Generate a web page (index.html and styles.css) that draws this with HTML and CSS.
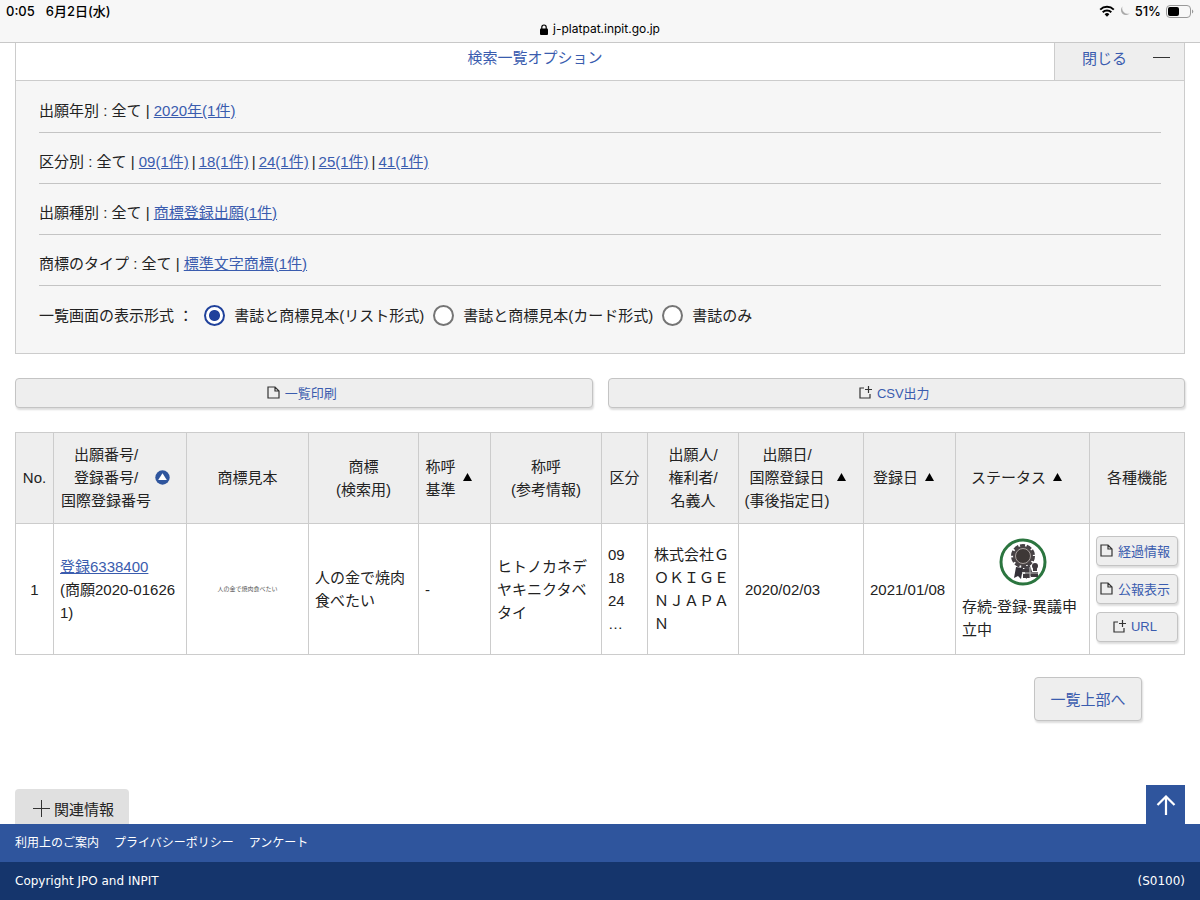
FILE: index.html
```html
<!DOCTYPE html>
<html lang="ja">
<head>
    <meta charset="UTF-8">
    <meta name="viewport" content="width=device-width, initial-scale=1.0">
    <title>J-PlatPat</title>
    <link rel="stylesheet" href="styles.css">
</head>
<body>

<header class="browser-bar">
    <div class="status">
        <div class="status-left"><span>0:05</span><span>6月2日(水)</span></div>
        <div class="status-right">
            <svg width="16" height="12" viewBox="0 0 16 12">
                <path d="M1.2 4.6a9.8 9.8 0 0 1 13.6 0M3.7 7.2a6.2 6.2 0 0 1 8.6 0" fill="none" stroke="#000" stroke-width="2"/>
                <path d="M8 11.8L5.6 9.3a3.4 3.4 0 0 1 4.8 0z"/>
            </svg>
            <svg class="moon" width="10" height="10" viewBox="0 0 10 10">
                <path d="M2.600 0.300A5 5 0 1 0 9.800 7.200A5.400 5.400 0 0 1 2.600 0.300z" fill="#aaa"/>
            </svg>
            <span>51%</span>
            <svg width="28" height="13" viewBox="0 0 28 13">
                <rect x="0.5" y="0.5" width="24" height="12" rx="3.5" fill="none" stroke="#999"/>
                <rect x="2" y="2" width="11" height="9" rx="2"/>
                <path d="M26 4.5a2.2 2.2 0 0 1 0 4z" fill="#999"/>
            </svg>
        </div>
    </div>
    <div class="address">
        <svg width="8" height="11" viewBox="0 0 8 11">
            <rect x="0" y="4.5" width="8" height="6.5" rx="1"/>
            <path d="M1.8 5V3.2a2.2 2.2 0 0 1 4.4 0V5" fill="none" stroke="#000" stroke-width="1.2"/>
        </svg>
        <span>j-platpat.inpit.go.jp</span>
    </div>
</header>

<main class="content">
    <section class="options">
        <div class="options-head">
            <h2 class="options-title">検索一覧オプション</h2>
            <button type="button" class="options-toggle"><span>閉じる</span><span class="minus"></span></button>
        </div>
        <div class="options-body">
            <div class="filter">出願年別 : 全て | <a href="#">2020年(1件)</a></div>
            <div class="filter">区分別 : 全て | <span class="filter-links"><a href="#">09(1件)</a> | <a href="#">18(1件)</a> | <a href="#">24(1件)</a> | <a href="#">25(1件)</a> | <a href="#">41(1件)</a></span></div>
            <div class="filter">出願種別 : 全て | <a href="#">商標登録出願(1件)</a></div>
            <div class="filter">商標のタイプ : 全て | <a href="#">標準文字商標(1件)</a></div>
            <div class="display-type" role="radiogroup" aria-labelledby="displayType">
                <span id="displayType" class="display-title">一覧画面の表示形式 ：</span>
                <label><input type="radio" name="display" checked>書誌と商標見本(リスト形式)</label>
                <label><input type="radio" name="display">書誌と商標見本(カード形式)</label>
                <label><input type="radio" name="display">書誌のみ</label>
            </div>
        </div>
    </section>

    <div class="actions">
        <button type="button" class="btn">
            <svg class="icon" viewBox="0 0 13 13"><path d="M1 1h7l4 4v7H1zM8 1v4h4"/></svg>一覧印刷
        </button>
        <button type="button" class="btn">
            <svg class="icon" viewBox="0 0 13 13"><path d="M5 2H1v10h10V8M9.500 0v7M6 3.500h7"/></svg>CSV出力
        </button>
    </div>

    <table class="results">
        <colgroup>
            <col class="col-no">
            <col class="col-number">
            <col class="col-sample">
            <col class="col-mark">
            <col class="col-basis">
            <col class="col-reading">
            <col class="col-class">
            <col class="col-owner">
            <col class="col-filed">
            <col class="col-registered">
            <col class="col-status">
            <col class="col-tools">
        </colgroup>
        <thead>
            <tr>
                <th>No.</th>
                <th>
                    <div class="sort-head">
                        <span>出願番号/<br>登録番号/<br>国際登録番号</span>
                        <button type="button" class="sort" aria-label="昇順">
                            <svg width="15" height="15" viewBox="0 0 15 15"><circle cx="7.500" cy="7.500" r="7.200" fill="#2f559d"/><path d="M7.500 3.200L11.800 10H3.200z" fill="#fff"/></svg>
                        </button>
                    </div>
                </th>
                <th>商標見本</th>
                <th>商標<br>(検索用)</th>
                <th>
                    <div class="sort-head">
                        <span>称呼<br>基準</span>
                        <button type="button" class="sort" aria-label="昇順"><svg width="15" height="15" viewBox="0 0 15 15"><path d="M7.500 3L12 11H3z"/></svg></button>
                    </div>
                </th>
                <th>称呼<br>(参考情報)</th>
                <th>区分</th>
                <th>出願人/<br>権利者/<br>名義人</th>
                <th>
                    <div class="sort-head">
                        <span>出願日/<br>国際登録日<br>(事後指定日)</span>
                        <button type="button" class="sort" aria-label="昇順"><svg width="15" height="15" viewBox="0 0 15 15"><path d="M7.500 3L12 11H3z"/></svg></button>
                    </div>
                </th>
                <th>
                    <div class="sort-head">
                        <span>登録日</span>
                        <button type="button" class="sort" aria-label="昇順"><svg width="15" height="15" viewBox="0 0 15 15"><path d="M7.500 3L12 11H3z"/></svg></button>
                    </div>
                </th>
                <th>
                    <div class="sort-head">
                        <span>ステータス</span>
                        <button type="button" class="sort" aria-label="昇順"><svg width="15" height="15" viewBox="0 0 15 15"><path d="M7.500 3L12 11H3z"/></svg></button>
                    </div>
                </th>
                <th>各種機能</th>
            </tr>
        </thead>
        <tbody>
            <tr>
                <td class="center">1</td>
                <td><a href="#">登録6338400</a><br>(商願2020-016261)</td>
                <td class="sample">人の金で焼肉食べたい</td>
                <td>人の金で焼肉食べたい</td>
                <td>-</td>
                <td>ヒトノカネデヤキニクタベタイ</td>
                <td>09<br>18<br>24<br>…</td>
                <td>株式会社ＧＯＫＩＧＥＮＪＡＰＡＮ</td>
                <td>2020/02/03</td>
                <td>2021/01/08</td>
                <td>
                    <svg class="medal" width="48" height="48" viewBox="0 0 48 48">
                        <circle cx="24" cy="24" r="22" fill="#fff" stroke="#2b753f" stroke-width="3"/>
                        <path d="M17 29l-2 11 4-2 3 3 2-11z" fill="#333038"/>
                        <path d="M25 28l2 13 3-3 5 1-4-11z" fill="#49454a"/>
                        <circle cx="24" cy="18" r="10.500" fill="none" stroke="#454044" stroke-width="3" stroke-dasharray="5 1.600"/>
                        <circle cx="24" cy="18" r="10" fill="#4a4446"/>
                        <circle cx="24" cy="18" r="7.500" fill="#3e3837" stroke="#aaa2a0" stroke-width="1"/>
                        <circle cx="36" cy="28" r="3" fill="#3e393e"/>
                        <path d="M34 30h4v3h-4zM32 34h7v5h-7zM23 31h7v3h-7zM24 36h7v4h-7z" fill="#3e393e"/>
                        <path d="M23 35h16M31 29v11" stroke="#bbb" stroke-width="1"/>
                    </svg>
                    存続-登録-異議申立中
                </td>
                <td>
                    <div class="tools">
                        <button type="button" class="btn"><svg class="icon" viewBox="0 0 13 13"><path d="M1 1h7l4 4v7H1zM8 1v4h4"/></svg>経過情報</button>
                        <button type="button" class="btn"><svg class="icon" viewBox="0 0 13 13"><path d="M1 1h7l4 4v7H1zM8 1v4h4"/></svg>公報表示</button>
                        <button type="button" class="btn"><svg class="icon" viewBox="0 0 13 13"><path d="M5 2H1v10h10V8M9.500 0v7M6 3.500h7"/></svg>URL</button>
                    </div>
                </td>
            </tr>
        </tbody>
    </table>

    <div class="list-top">
        <button type="button" class="btn btn-large">一覧上部へ</button>
    </div>

    <div class="bottom-tabs">
        <button type="button" class="related">
            <svg width="17" height="17" viewBox="0 0 17 17"><path d="M8.500 0v17M0 8.500h17" stroke="#333" fill="none"/></svg>関連情報
        </button>
        <a href="#" class="page-top" aria-label="ページ上部へ">
            <svg width="20" height="20" viewBox="0 0 20 20"><path d="M10 20V2M1.500 10L10 1.500l8.500 8.500" fill="none" stroke="#fff" stroke-width="2.200"/></svg>
        </a>
    </div>
</main>

<footer>
    <nav class="footer-links">
        <a href="#">利用上のご案内</a>
        <a href="#">プライバシーポリシー</a>
        <a href="#">アンケート</a>
    </nav>
    <div class="copyright">
        <span>Copyright JPO and INPIT</span>
        <span>(S0100)</span>
    </div>
</footer>

</body>
</html>
```
FILE: styles.css
```css
* {
    box-sizing: border-box;
}
body {
    display: flex;
    flex-direction: column;
    min-height: 100vh;
    margin: 0;
    background-color: #fff;
    color: #222;
    font-family: "Liberation Sans", "Noto Sans CJK JP", sans-serif;
    font-size: 15px;
    line-height: 23px;
}
a {
    color: #3a5cae;
}
button {
    font-family: inherit;
    color: #3a5cae;
    cursor: pointer;
}

/* ブラウザバー */
.browser-bar {
    height: 43px;
    padding: 1px 6px 0;
    background-color: #f7f7f7;
    border-bottom: 1px solid #c8c8c8;
    color: #000;
    font-family: Inter, "Noto Sans CJK JP", sans-serif;
    font-size: 13px;
    line-height: 20px;
}
.status {
    display: flex;
    justify-content: space-between;
    font-weight: 500;
}
.status-left {
    display: flex;
    gap: 11px;
}
.status-right {
    display: flex;
    align-items: center;
    gap: 5px;
}
.address {
    display: flex;
    justify-content: center;
    align-items: center;
    gap: 5px;
    font-size: 12px;
    line-height: 16px;
}

.content {
    flex: 1;
    display: flex;
    flex-direction: column;
    padding: 0 15px;
}

/* 検索一覧オプション */
.options {
    border: 1px solid #ccc;
    border-top: none;
}
.options-head {
    display: flex;
    height: 38px;
    border-bottom: 1px solid #ccc;
}
.options-title {
    flex: 1;
    margin: 0;
    padding-top: 3px;
    color: #3a5cae;
    font-size: 15px;
    font-weight: normal;
    text-align: center;
}
.options-toggle {
    display: flex;
    justify-content: space-between;
    align-items: center;
    width: 130px;
    padding: 0 14px 9px 27px;
    background-color: #eee;
    border: none;
    border-left: 1px solid #ccc;
    font-size: 15px;
}
.minus {
    width: 17px;
    height: 1px;
    background-color: #333;
}
.options-body {
    padding: 1px 23px 0;
    background-color: #f6f6f6;
}
.filter {
    padding: 17px 0 10px;
    border-bottom: 1px solid #c4c4c4;
}
.filter-links {
    display: inline-flex;
    gap: 3px;
}
.display-type {
    display: flex;
    align-items: center;
    gap: 9px;
    padding: 18px 0 26px;
}
.display-title {
    margin-right: 2px;
}
.display-type label {
    display: flex;
    align-items: center;
    gap: 9px;
}
.display-type input {
    appearance: none;
    width: 21px;
    height: 21px;
    margin: 0;
    border: 2px solid #757575;
    border-radius: 50%;
    background-color: #fff;
}
.display-type input:checked {
    border-color: #1f419b;
    background-image: radial-gradient(circle, #1f419b 5px, #fff 6px);
}

/* ボタン */
.btn {
    display: flex;
    justify-content: center;
    align-items: center;
    gap: 5px;
    height: 30px;
    padding: 0 4px 1px 0;
    background-color: #eee;
    border: 1px solid #c4c4c4;
    border-radius: 4px;
    box-shadow: 1px 2px 2px #ddd;
    font-size: 13px;
    white-space: nowrap;
}
.icon {
    width: 13px;
    height: 13px;
    fill: none;
    stroke: #333;
    stroke-width: 1.2;
}
.actions {
    display: grid;
    grid-template-columns: 1fr 1fr;
    gap: 15px;
    margin: 24px 0;
}

/* 検索結果 */
.results {
    width: 100%;
    table-layout: fixed;
    border-collapse: collapse;
}
.results th, .results td {
    border: 1px solid #ccc;
    word-break: break-all;
}
.results th {
    padding: 10px 0 11px;
    background-color: #eee;
    font-weight: normal;
    text-align: center;
}
.results td {
    padding: 12px 6px;
    text-align: left;
}
.results .center {
    text-align: center;
}
.col-no { width: 38px; }
.col-number { width: 133px; }
.col-sample { width: 122px; }
.col-mark { width: 110px; }
.col-basis { width: 72px; }
.col-reading { width: 111px; }
.col-class { width: 46px; }
.col-owner { width: 91px; }
.col-filed { width: 125px; }
.col-registered { width: 92px; }
.col-status { width: 134px; }
.col-tools { width: 95px; }
.sort-head {
    display: flex;
    justify-content: center;
    align-items: center;
    white-space: nowrap;
}
.sort {
    display: flex;
    margin: 0 9px 0 4px;
    padding: 0;
    background: none;
    border: none;
}
.results .sample {
    color: #555;
    font-family: "Liberation Serif", "Noto Sans CJK JP", serif;
    font-size: 6px;
    text-align: center;
}
.medal {
    display: block;
    margin: 0 auto 9px;
}
.tools {
    display: flex;
    flex-direction: column;
    gap: 8px;
}

.list-top {
    display: flex;
    justify-content: flex-end;
    padding: 22px 43px 0 0;
}
.btn-large {
    width: 108px;
    height: 44px;
    padding: 0 0 2px;
    font-size: 15px;
}

/* 画面下部 */
.bottom-tabs {
    display: flex;
    justify-content: space-between;
    align-items: flex-end;
    margin-top: auto;
}
.related {
    display: flex;
    align-items: center;
    gap: 4px;
    height: 35px;
    padding: 3px 15px 0 18px;
    background-color: #e0e0e0;
    border: none;
    border-radius: 4px 4px 0 0;
    color: #222;
    font-size: 15px;
}
.page-top {
    display: flex;
    justify-content: center;
    align-items: center;
    width: 39px;
    height: 39px;
    background-color: #2f559d;
}
.footer-links {
    display: flex;
    gap: 15px;
    padding: 0 15px;
    background-color: #2f559d;
    font-size: 12px;
    line-height: 38px;
}
.footer-links a {
    color: #fff;
    text-decoration: none;
}
.copyright {
    display: flex;
    justify-content: space-between;
    padding: 0 15px;
    background-color: #15356c;
    color: #fff;
    font-family: "DejaVu Sans", sans-serif;
    font-size: 12px;
    line-height: 38px;
}
```
